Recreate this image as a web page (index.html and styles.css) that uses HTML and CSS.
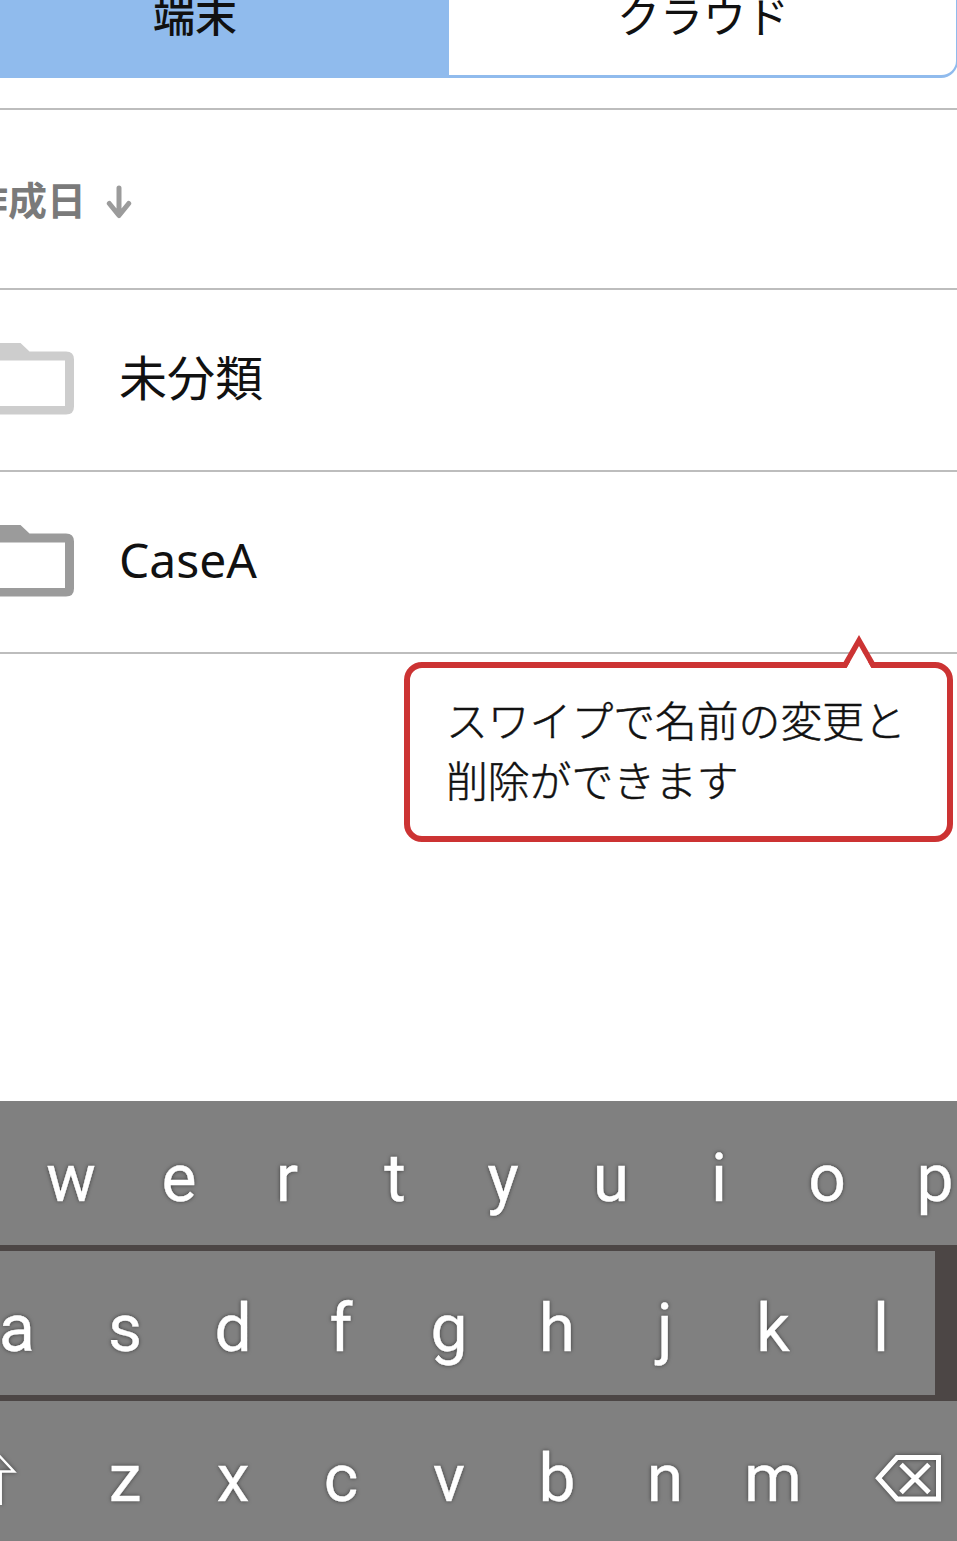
FILE: index.html
```html
<!DOCTYPE html>
<html lang="ja">
<head>
<meta charset="utf-8">
<title>端末</title>
<link rel="stylesheet" href="styles.css">
</head>
<body>
<div class="screen">
  <div class="tabs">
    <div class="tab tab-active">端末</div>
    <div class="tab tab-cloud">クラウド</div>
  </div>
  <div class="list">
    <div class="sort">
      <span class="sort-label">作成日</span>
      <svg class="sort-arrow" width="26" height="36" viewBox="0 0 26 36"><path d="M13 4V31M3.3 19.500L13 31.500L22.700 19.500"/></svg>
    </div>
    <div class="row">
      <svg class="folder folder-light" width="74" height="74" viewBox="0 0 74 74"><path fill-rule="evenodd" d="M0 1H20.500L29.500 9.500H66Q74 9.500 74 17.500V64.500Q74 72.500 66 72.500H0ZM0 18.500V64H65V18.500Z"/></svg>
      <span class="row-name">未分類</span>
    </div>
    <div class="row">
      <svg class="folder" width="74" height="74" viewBox="0 0 74 74"><path fill-rule="evenodd" d="M0 1H20.500L29.500 9.500H66Q74 9.500 74 17.500V64.500Q74 72.500 66 72.500H0ZM0 18.500V64H65V18.500Z"/></svg>
      <span class="row-name">CaseA</span>
    </div>
    <div class="balloon">
      <svg class="balloon-tail" width="34" height="34" viewBox="0 0 34 34"><path class="tail-fill" d="M4.500 33L17 11L29.500 33V34H4.500Z"/><path class="tail-edge" d="M1 28L17 0L33 28L29.500 33L17 11L4.500 33Z"/></svg>
      スワイプで名前の変更と<br>削除ができます
    </div>
  </div>
  <div class="keyboard">
    <div class="keys keys-top"><span>w</span><span>e</span><span>r</span><span>t</span><span>y</span><span>u</span><span>i</span><span>o</span><span>p</span></div>
    <div class="keys keys-home"><span>a</span><span>s</span><span>d</span><span>f</span><span>g</span><span>h</span><span>j</span><span>k</span><span>l</span></div>
    <div class="keys keys-bottom">
      <svg class="shift" width="71" height="144" viewBox="0 0 71 144"><path d="M-12 104V70.500H-27L-6.500 48.500L14 70.500H.7V104"/></svg>
      <span>z</span><span>x</span><span>c</span><span>v</span><span>b</span><span>n</span><span>m</span>
      <svg class="backspace" width="130" height="144" viewBox="0 0 130 144"><path d="M51.500 77.200L70 56.500H111.500V98H70ZM74 63.500L102 91.500M102 63.500L74 91.500"/></svg>
    </div>
  </div>
</div>
</body>
</html>
```
FILE: styles.css
```css
body {
  margin: 0;
  background: #fff;
}

.screen {
  display: flex;
  flex-direction: column;
  width: 957px;
  height: 1541px;
  overflow: hidden;
  color: #111;
  font-family: "Noto Sans CJK JP", sans-serif;
}

.tabs {
  display: flex;
  flex: none;
  width: 959px;
  height: 78px;
  font-size: 42px;
  line-height: 28px;
}

.tab {
  box-sizing: border-box;
  font-weight: 500;
}

.tab-active {
  width: 449px;
  padding-left: 153px;
  background: #90bbed;
}

.tab-cloud {
  width: 509px;
  padding-left: 168px;
  font-size: 43px;
  font-weight: 400;
  border-right: 2px solid #90bbed;
  border-bottom: 3px solid #90bbed;
  border-bottom-right-radius: 17px;
}

.list {
  flex: none;
  height: 993px;
  margin-top: 30px;
  position: relative;
}

.sort,
.row {
  display: flex;
  box-sizing: border-box;
  align-items: center;
  border-top: 2px solid #bdbdbd;
}

.sort {
  height: 180px;
}

.sort-label {
  margin: -2px 0 0 -31px;
  color: #7a7a7a;
  font-size: 39px;
  font-weight: 700;
  line-height: 56px;
  white-space: nowrap;
}

.sort-arrow {
  margin: 6px 0 0 20px;
}

.sort-arrow path {
  fill: none;
  stroke: #9b9b9b;
  stroke-width: 5;
  stroke-linecap: round;
  stroke-linejoin: round;
}

.row {
  height: 182px;
}

.row + .row {
  height: 184px;
  border-bottom: 2px solid #bdbdbd;
}

.folder {
  margin-top: -2px;
  fill: #9b9b9b;
}

.folder-light {
  fill: #cdcdcd;
}

.row-name {
  margin: -4px 0 0 45px;
  font-family: "Noto Sans", "Noto Sans CJK JP", sans-serif;
  font-size: 48px;
  line-height: 70px;
}

.balloon {
  position: absolute;
  top: 554px;
  left: 404px;
  box-sizing: border-box;
  width: 549px;
  height: 180px;
  padding: 21px 0 0 36px;
  border: 6px solid #cc3333;
  border-radius: 18px;
  background: #fff;
  font-size: 41.8px;
  font-weight: 300;
  line-height: 60px;
  white-space: nowrap;
  -webkit-text-stroke: .5px #111;
}

.balloon-tail {
  position: absolute;
  top: -33px;
  left: 431.5px;
}

.tail-fill {
  fill: #fff;
}

.tail-edge {
  fill: #cc3333;
}

.keyboard {
  display: flex;
  flex: none;
  flex-direction: column;
  gap: 6px;
  height: 440px;
  overflow: hidden;
  background: #4c4645;
  color: #fff;
  font-family: Roboto, sans-serif;
  font-size: 66px;
  line-height: 156px;
  text-shadow: 0 0 4px rgba(0, 0, 0, .6);
  -webkit-text-stroke: .4px #fff;
}

.keys {
  display: flex;
  flex: none;
  height: 144px;
  background: #808080;
}

.keys span {
  flex: none;
  width: 108px;
  text-align: center;
}

.keys-top {
  padding-left: 17px;
}

.keys-home {
  width: 972px;
  margin-left: -37px;
}

.keys svg {
  flex: none;
  fill: none;
  stroke: #fff;
  filter: drop-shadow(0 0 2px rgba(0, 0, 0, .5));
}

.shift {
  stroke-width: 2.5;
}

.backspace {
  stroke-width: 5;
}
```
